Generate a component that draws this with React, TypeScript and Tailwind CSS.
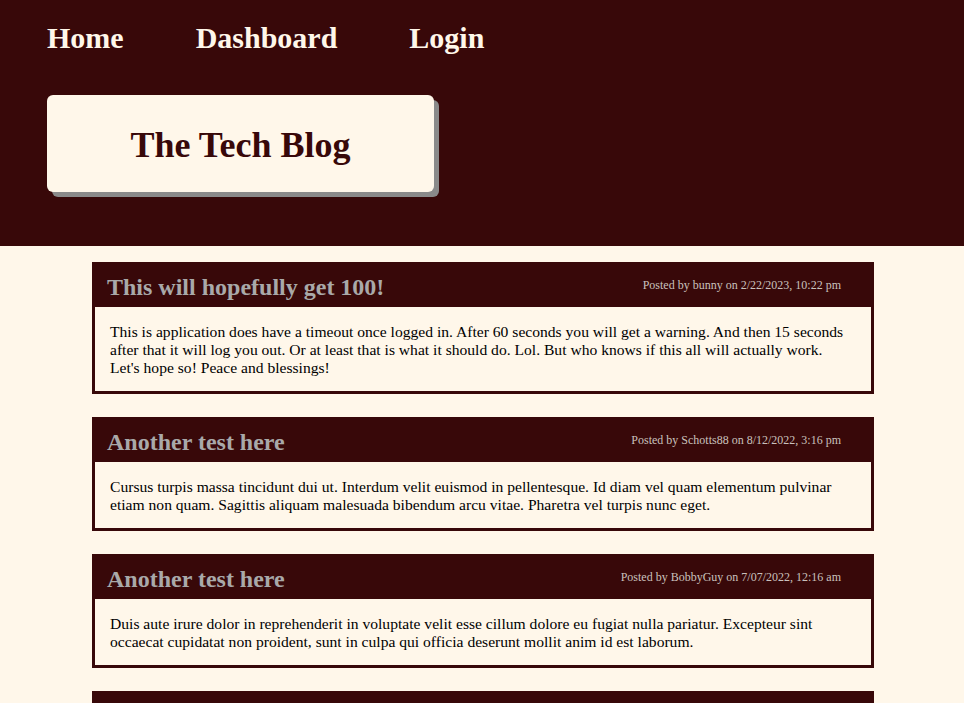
import React from "react";

const posts = [
  {
    title: "This will hopefully get 100!",
    meta: "Posted by bunny on 2/22/2023, 10:22 pm",
    body: "This is application does have a timeout once logged in. After 60 seconds you will get a warning. And then 15 seconds after that it will log you out. Or at least that is what it should do. Lol. But who knows if this all will actually work. Let's hope so! Peace and blessings!",
  },
  {
    title: "Another test here",
    meta: "Posted by Schotts88 on 8/12/2022, 3:16 pm",
    body: "Cursus turpis massa tincidunt dui ut. Interdum velit euismod in pellentesque. Id diam vel quam elementum pulvinar etiam non quam. Sagittis aliquam malesuada bibendum arcu vitae. Pharetra vel turpis nunc eget.",
  },
  {
    title: "Another test here",
    meta: "Posted by BobbyGuy on 7/07/2022, 12:16 am",
    body: "Duis aute irure dolor in reprehenderit in voluptate velit esse cillum dolore eu fugiat nulla pariatur. Excepteur sint occaecat cupidatat non proident, sunt in culpa qui officia deserunt mollit anim id est laborum.",
  },
  {
    title: "First test post",
    meta: "Posted by bunny on 7/01/2022, 9:02 am",
    body: "Lorem ipsum dolor sit amet, consectetur adipiscing elit, sed do eiusmod tempor incididunt ut labore et dolore magna aliqua.",
  },
];

export default function App() {
  return (
    <div
      className="min-h-[703px] bg-[#fff7ea] text-black"
      style={{ fontFamily: '"Liberation Serif", "Times New Roman", serif' }}
    >
      <header className="bg-[#380809] h-[246px] pt-[21px] pl-[47px]">
        <nav className="flex gap-[72px] text-[30px] font-bold leading-[34px] text-[#fff7ea]">
          <a href="#">Home</a>
          <a href="#">Dashboard</a>
          <a href="#">Login</a>
        </nav>
        <div className="mt-[40px] w-[387px] h-[97px] rounded-[6px] bg-[#fff7ea] shadow-[5px_5px_0_#8a8a8a] flex items-center justify-center">
          <h1 className="text-[36px] font-bold text-[#380809] leading-[40px] pt-[2px]">The Tech Blog</h1>
        </div>
      </header>
      <main className="pt-[16px] pl-[92px] flex flex-col gap-[23px]">
        {posts.map((p, i) => (
          <article key={i} className="w-[782px] bg-[#380809] px-[3px] pb-[3px]">
            <div className="h-[45px] flex items-center justify-between pl-[12px] pr-[30px]">
              <h2 className="text-[24px] font-bold text-[#a9a9a9] leading-[28px] pt-[4px]">{p.title}</h2>
              <span className="text-[12px] text-[#c9c1bd]">{p.meta}</span>
            </div>
            <div className="bg-[#fff7ea] pl-[15px] pr-[20px] pt-[16px] pb-[14px] text-[15.6px] leading-[18px]">
              {p.body}
            </div>
          </article>
        ))}
      </main>
    </div>
  );
}
